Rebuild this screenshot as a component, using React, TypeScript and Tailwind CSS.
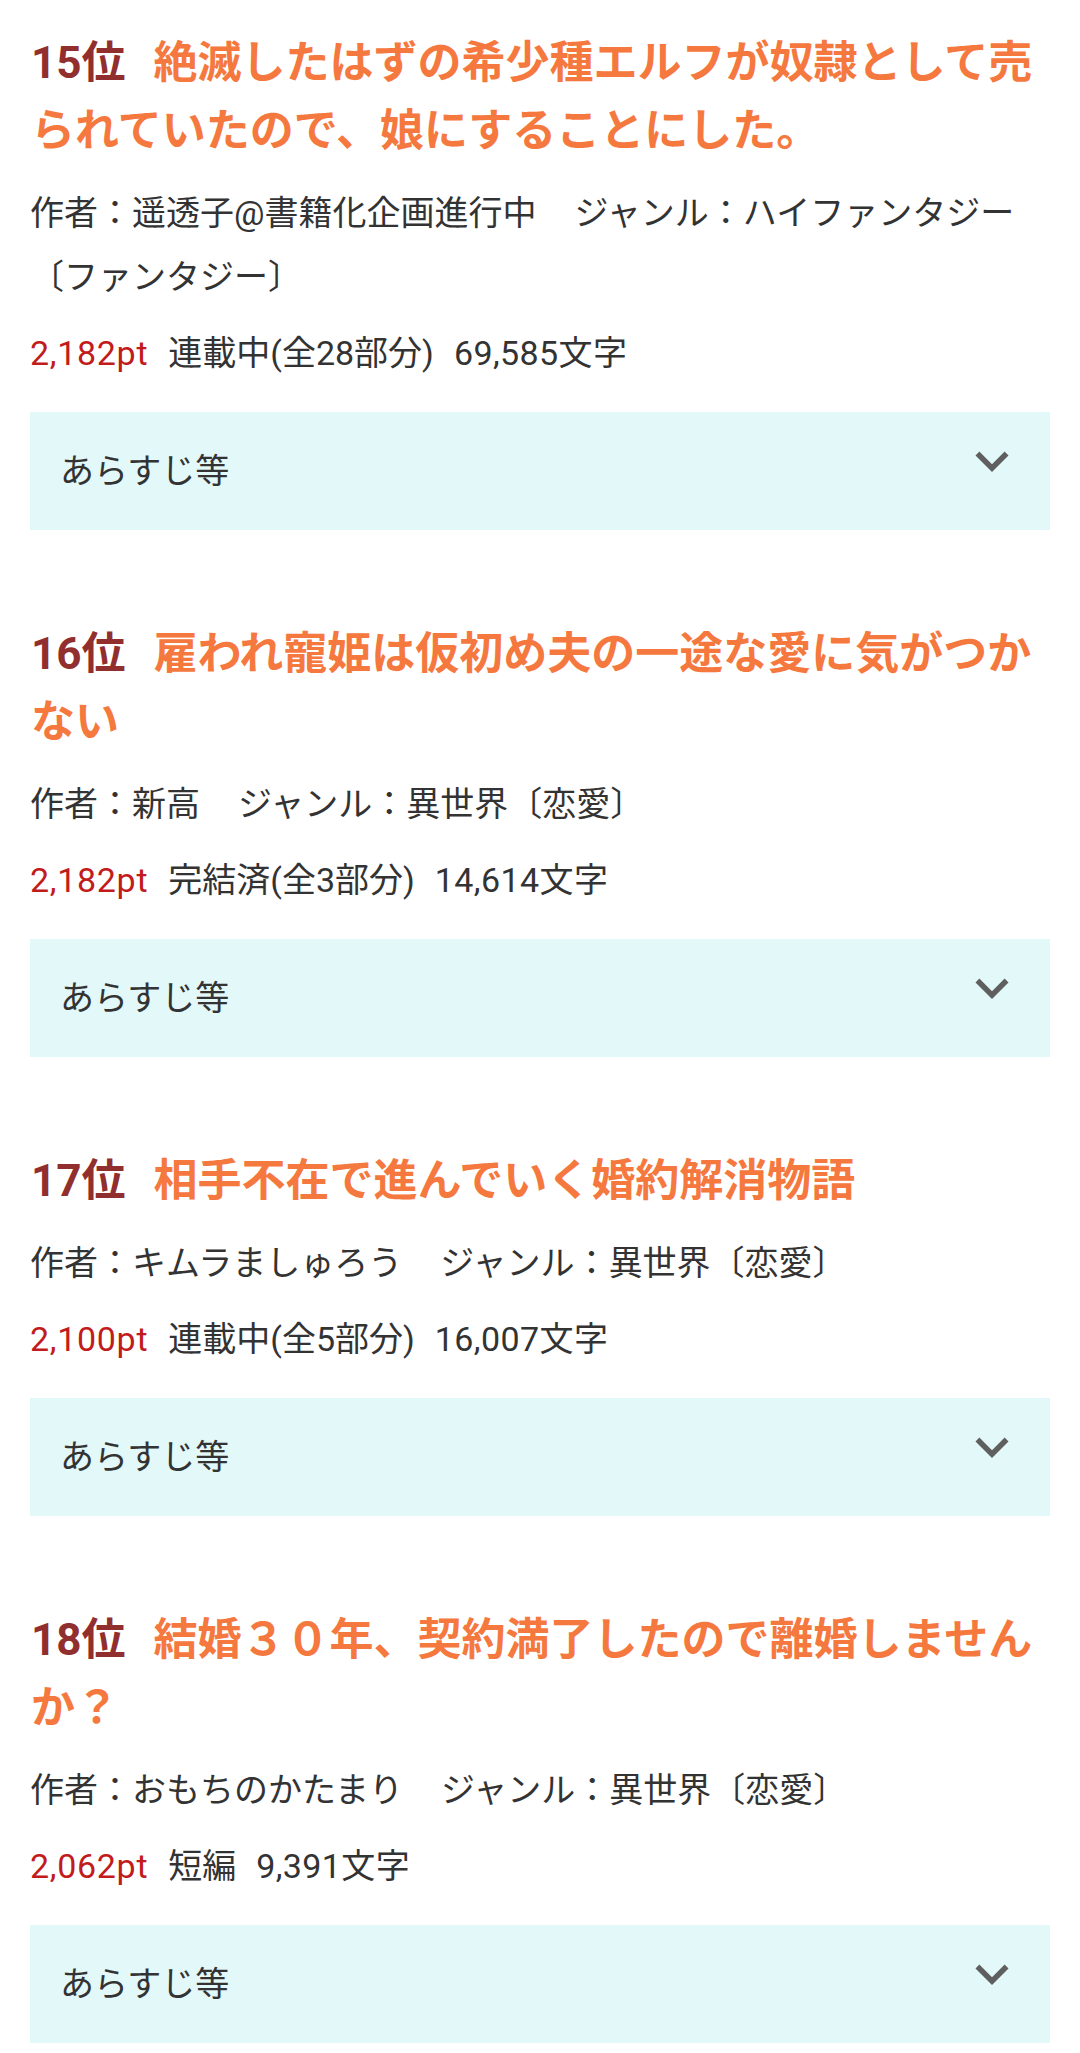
import React from "react";

type Work = {
  rank: number;
  title: string;
  author: string;
  genre: string;
  points: string;
  status: string;
  chars: string;
};

const works: Work[] = [
  {
    rank: 15,
    title: "絶滅したはずの希少種エルフが奴隷として売られていたので、娘にすることにした。",
    author: "遥透子@書籍化企画進行中",
    genre: "ハイファンタジー〔ファンタジー〕",
    points: "2,182pt",
    status: "連載中(全28部分)",
    chars: "69,585文字",
  },
  {
    rank: 16,
    title: "雇われ寵姫は仮初め夫の一途な愛に気がつかない",
    author: "新高",
    genre: "異世界〔恋愛〕",
    points: "2,182pt",
    status: "完結済(全3部分)",
    chars: "14,614文字",
  },
  {
    rank: 17,
    title: "相手不在で進んでいく婚約解消物語",
    author: "キムラましゅろう",
    genre: "異世界〔恋愛〕",
    points: "2,100pt",
    status: "連載中(全5部分)",
    chars: "16,007文字",
  },
  {
    rank: 18,
    title: "結婚３０年、契約満了したので離婚しませんか？",
    author: "おもちのかたまり",
    genre: "異世界〔恋愛〕",
    points: "2,062pt",
    status: "短編",
    chars: "9,391文字",
  },
];

function ChevronDown() {
  return (
    <svg
      viewBox="0 0 24 24"
      className="w-[66px] h-[66px] shrink-0 -translate-y-[10px]"
      fill="#5f5f5f"
      aria-hidden="true"
    >
      <path d="M16.59 8.59L12 13.17 7.41 8.59 6 10l6 6 6-6z" />
    </svg>
  );
}

function RankingItem({ work, first }: { work: Work; first: boolean }) {
  return (
    <div className={first ? "" : "mt-[90px]"}>
      <h2 className="text-[44px] leading-[68px] font-bold pl-px">
        <span className="text-[#912f2f] mr-[28px]">{work.rank}位</span>
        <span className="text-[#f5793f]">{work.title}</span>
      </h2>
      <p className="mt-[16px] text-[34px] leading-[64px] text-[#333333]">
        作者：{work.author}
        <span className="ml-[38px]">ジャンル：{work.genre}</span>
      </p>
      <p className="mt-[12px] text-[34px] leading-[64px] text-[#333333]">
        <span className="text-[#c21b1b] tracking-[0.7px]">{work.points}</span>
        <span className="ml-[20px]">{work.status}</span>
        <span className="ml-[20px] tracking-[0.4px]">{work.chars}</span>
      </p>
      <button
        type="button"
        className="mt-[27px] w-full h-[118px] bg-[#e3f8f8] flex items-center justify-between pl-[30px] pr-[25px] text-left"
      >
        <span className="text-[34px] leading-[40px] text-[#333333]">あらすじ等</span>
        <ChevronDown />
      </button>
    </div>
  );
}

export default function App() {
  return (
    <div
      className="min-h-[2053px] bg-white px-[30px] pt-[29px] pb-[20px]"
      style={{ fontFamily: 'Roboto, "Noto Sans CJK JP", "Noto Sans", sans-serif' }}
    >
      {works.map((w, i) => (
        <RankingItem key={w.rank} work={w} first={i === 0} />
      ))}
    </div>
  );
}
